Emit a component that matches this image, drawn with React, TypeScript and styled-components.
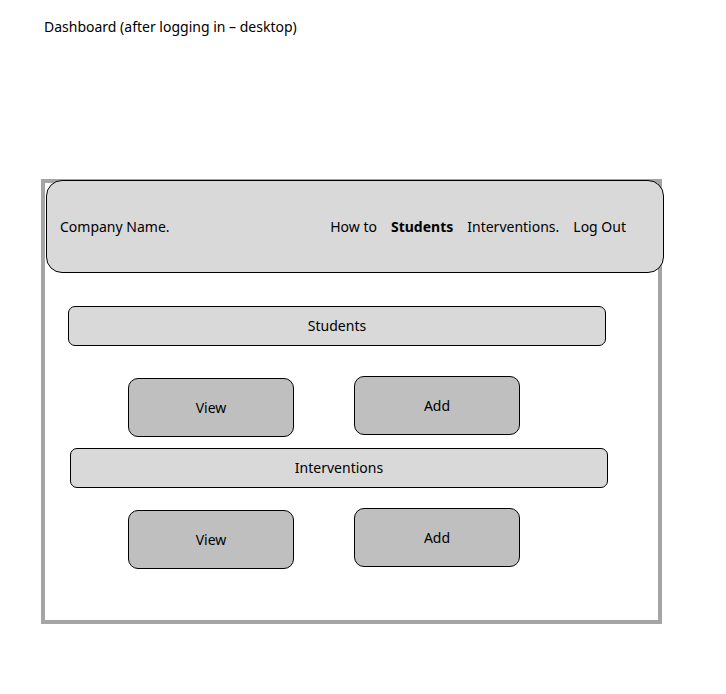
import React from "react";
import styled, { createGlobalStyle } from "styled-components";

const GlobalStyle = createGlobalStyle`
  *, *::before, *::after { box-sizing: border-box; }
  body {
    margin: 0;
    background: #fff;
    color: #000;
    font-family: "Noto Sans", "Open Sans", sans-serif;
    font-size: 14px;
    line-height: 20px;
  }
`;

const Page = styled.main`
  padding: 17px 64px 70px 41px;
`;

const Title = styled.h1`
  margin: 0 0 142px;
  padding-left: 3px;
  font-size: 14px;
  font-weight: 400;
`;

const Frame = styled.div`
  border: 4px solid #a5a5a5;
  padding-bottom: 51px;
`;

const Header = styled.header`
  display: flex;
  align-items: center;
  justify-content: space-between;
  min-height: 93px;
  margin: -3px -6px 0 1px;
  padding: 0 37px 0 13px;
  border: 1px solid #000;
  border-radius: 16px;
  background: #d9d9d9;
`;

const Nav = styled.nav`
  display: flex;
  gap: 14px;
`;

const NavLink = styled.a<{ $current?: boolean }>`
  color: inherit;
  text-decoration: none;
  font-weight: ${(p) => (p.$current ? 700 : 400)};
`;

const SectionTitle = styled.h2<{ $top: number; $left: number; $right: number }>`
  display: flex;
  align-items: center;
  justify-content: center;
  min-height: 40px;
  margin: ${(p) => p.$top}px ${(p) => p.$right}px 0 ${(p) => p.$left}px;
  border: 1px solid #000;
  border-radius: 7px;
  background: #d9d9d9;
  font-size: 14px;
  font-weight: 400;
`;

const Actions = styled.div<{ $top: number }>`
  display: grid;
  grid-template-columns: 1fr 1fr;
  gap: 60px;
  min-height: 61px;
  margin: ${(p) => p.$top}px 138px 0 83px;
`;

const Action = styled.button<{ $align: "start" | "end" }>`
  align-self: ${(p) => p.$align};
  height: 59px;
  padding: 0;
  border: 1px solid #000;
  border-radius: 10px;
  background: #bfbfbf;
  color: inherit;
  font: inherit;
`;

export default function App() {
  return (
    <>
      <GlobalStyle />
      <Page>
        <Title>Dashboard (after logging in – desktop)</Title>
        <Frame>
          <Header>
            <span>Company Name.</span>
            <Nav>
              <NavLink href="#how-to">How to</NavLink>
              <NavLink href="#students" $current aria-current="page">Students</NavLink>
              <NavLink href="#interventions">Interventions.</NavLink>
              <NavLink href="#log-out">Log Out</NavLink>
            </Nav>
          </Header>
          <section aria-labelledby="students">
            <SectionTitle id="students" $top={33} $left={23} $right={52}>Students</SectionTitle>
            <Actions $top={30}>
              <Action type="button" $align="end">View</Action>
              <Action type="button" $align="start">Add</Action>
            </Actions>
          </section>
          <section aria-labelledby="interventions">
            <SectionTitle id="interventions" $top={11} $left={25} $right={50}>Interventions</SectionTitle>
            <Actions $top={20}>
              <Action type="button" $align="end">View</Action>
              <Action type="button" $align="start">Add</Action>
            </Actions>
          </section>
        </Frame>
      </Page>
    </>
  );
}
